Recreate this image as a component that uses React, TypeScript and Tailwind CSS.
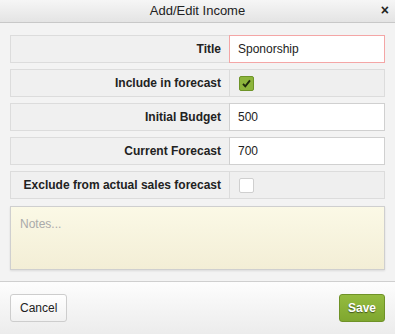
import { useState } from "react";

const font = { fontFamily: '"Liberation Sans", Arial, sans-serif' };

function Label({ text }: { text: string }) {
  return (
    <div className="w-[219px] h-full flex items-center justify-end pr-[8px] border border-r-0 border-[#dcdcdc] bg-[#f0f0f0] text-[12px] font-bold text-[#222]">
      {text}
    </div>
  );
}

function TextRow({ label, value, error }: { label: string; value: string; error?: boolean }) {
  const [val, setVal] = useState(value);
  return (
    <div className="flex h-[28px]">
      <Label text={label} />
      <input
        value={val}
        onChange={(e) => setVal(e.target.value)}
        className={`flex-1 min-w-0 h-full px-[8px] bg-white text-[12px] text-[#222] outline-none border ${
          error ? "border-[#f4a6a6]" : "border-[#d0d0d0]"
        }`}
        style={font}
      />
    </div>
  );
}

function CheckRow({ label, checked }: { label: string; checked: boolean }) {
  const [on, setOn] = useState(checked);
  return (
    <div className="flex h-[28px]">
      <Label text={label} />
      <div className="flex-1 h-full flex items-center pl-[9px] border border-[#dcdcdc] bg-[#efefef]">
        <button
          onClick={() => setOn(!on)}
          className={`w-[15px] h-[15px] rounded-[2px] flex items-center justify-center border ${
            on ? "bg-[#8db53c] border-[#6e9428]" : "bg-white border-[#cfcfcf]"
          }`}
        >
          {on && (
            <svg width="11" height="11" viewBox="0 0 11 11">
              <path d="M2 5.8 L4.3 8.3 L9 2.3" fill="none" stroke="#1e2a0c" strokeWidth="1.9" />
            </svg>
          )}
        </button>
      </div>
    </div>
  );
}

export default function App() {
  return (
    <div className="w-[395px] h-[334px] bg-[#f3f3f3] flex flex-col overflow-hidden" style={font}>
      <div className="relative h-[23px] shrink-0 flex items-center justify-center border-b border-[#c8c8c8] bg-gradient-to-b from-[#f6f6f6] to-[#e4e4e4]">
        <span className="text-[13px] text-[#222]">Add/Edit Income</span>
        <span className="absolute right-[6px] top-[3px] text-[14px] font-bold text-[#222] leading-none">×</span>
      </div>

      <div className="flex flex-col gap-[6px] px-[10px] pt-[12px]">
        <TextRow label="Title" value="Sponorship" error />
        <CheckRow label="Include in forecast" checked />
        <TextRow label="Initial Budget" value="500" />
        <TextRow label="Current Forecast" value="700" />
        <CheckRow label="Exclude from actual sales forecast" checked={false} />
        <textarea
          placeholder="Notes..."
          className="mt-[1px] h-[64px] resize-none px-[9px] py-[8px] text-[12px] outline-none border border-[#cfcfcf] bg-gradient-to-b from-[#fbf9e6] to-[#f3eed6] placeholder:text-[#aaa] shadow-[0_1px_2px_rgba(0,0,0,0.1)]"
          style={font}
        />
      </div>

      <div className="mt-auto h-[53px] flex items-center justify-between px-[10px] border-t border-[#cfcfcf] bg-gradient-to-b from-[#fdfdfd] to-[#ececec]">
        <button className="h-[28px] px-[9px] rounded-[3px] border border-[#cdcdcd] bg-gradient-to-b from-white to-[#f1f1f1] text-[12px] text-[#222]">
          Cancel
        </button>
        <button className="h-[28px] w-[46px] rounded-[3px] border border-[#6f9227] bg-gradient-to-b from-[#94bb3f] to-[#7fa72f] text-[12px] font-bold text-white [text-shadow:0_1px_1px_rgba(0,0,0,0.5)]">
          Save
        </button>
      </div>
    </div>
  );
}
